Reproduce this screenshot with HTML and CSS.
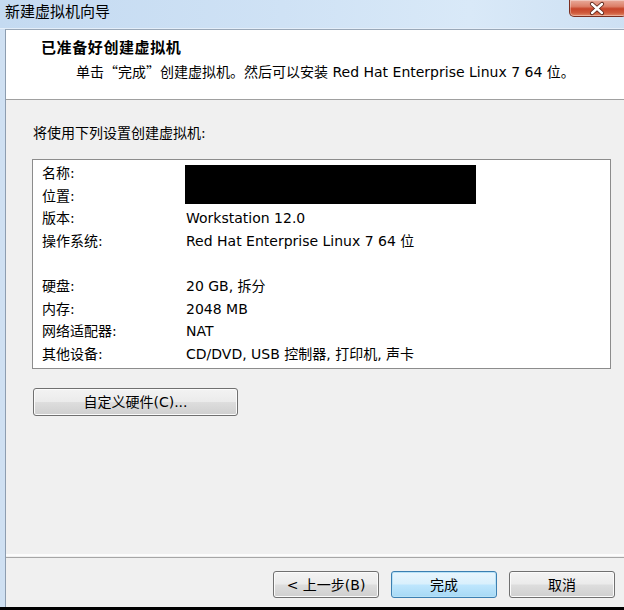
FILE: index.html
```html
<!DOCTYPE html>
<html lang="zh-CN">
<head>
<meta charset="utf-8">
<title>新建虚拟机向导</title>
<link rel="stylesheet" href="styles.css">
</head>
<body>
<div class="window">
  <div class="titlebar">
    <div class="title">新建虚拟机向导</div>
    <div class="close">
      <svg width="58" height="17" viewBox="0 0 58 17">
        <path d="M24 4 L34 13 M34 4 L24 13" stroke="#5a2318" stroke-width="4.2" stroke-linecap="round" fill="none"/>
        <path d="M24 4 L34 13 M34 4 L24 13" stroke="#ffffff" stroke-width="2.4" stroke-linecap="round" fill="none"/>
      </svg>
    </div>
  </div>
  <div class="frame">
    <div class="client">
      <div class="header">
        <div class="h-title">已准备好创建虚拟机</div>
        <div class="h-sub">单击<span class="cjk">“</span>完成<span class="cjk">”</span>创建虚拟机。然后可以安装 Red Hat Enterprise Linux 7 64 位。</div>
      </div>
      <div class="main">
        <div class="intro">将使用下列设置创建虚拟机:</div>
        <div class="listbox">
          <div class="k">名称:</div><div class="v"></div>
          <div class="k">位置:</div><div class="v"></div>
          <div class="k">版本:</div><div class="v">Workstation 12.0</div>
          <div class="k">操作系统:</div><div class="v">Red Hat Enterprise Linux 7 64 位</div>
          <div class="k blank"></div><div class="v blank"></div>
          <div class="k">硬盘:</div><div class="v">20 GB, 拆分</div>
          <div class="k">内存:</div><div class="v">2048 MB</div>
          <div class="k">网络适配器:</div><div class="v">NAT</div>
          <div class="k">其他设备:</div><div class="v">CD/DVD, USB 控制器, 打印机, 声卡</div>
          <div class="redact"></div>
        </div>
        <div class="btn custom">自定义硬件(C)...</div>
      </div>
      <div class="sep"></div>
      <div class="footer">
        <div class="btn">&lt; 上一步(B)</div>
        <div class="btn default">完成</div>
        <div class="btn">取消</div>
      </div>
    </div>
  </div>
</div>
</body>
</html>
```
FILE: styles.css
```css
html, body {
  margin: 0;
  padding: 0;
  width: 624px;
  height: 610px;
  overflow: hidden;
  background: #000;
}
body {
  font-family: "DejaVu Sans", "Noto Sans CJK SC", sans-serif;
  font-size: 14px;
  color: #000;
}
.cjk {
  font-family: "Noto Sans CJK SC", sans-serif;
}
.window {
  width: 627px;
  height: 610px;
  box-sizing: border-box;
  border-bottom: 3px solid #000;
  display: flex;
  flex-direction: column;
  background: #cfe0f2;
}
.titlebar {
  height: 29px;
  flex: none;
  display: flex;
  align-items: flex-start;
  background: linear-gradient(to right, #c4daf1 0%, #cfe2f5 45%, #d9e9f8 75%, #cde0f3 100%);
  box-sizing: border-box;
  border-bottom: 1px solid #e4eef9;
}
.title {
  padding-left: 5px;
  line-height: 24px;
  font-size: 15px;
  color: #000;
}
.close {
  margin-left: auto;
  width: 58px;
  height: 17px;
  box-sizing: border-box;
  border: 1px solid #7b2e20;
  border-top: none;
  border-radius: 0 0 5px 5px;
  background: linear-gradient(#e9ab9c 0%, #dc7f68 40%, #c7452b 55%, #cf5a3c 80%, #e38c6c 100%);
  box-shadow: inset 0 0 0 1px rgba(255,255,255,0.35);
  display: flex;
  align-items: center;
  justify-content: center;
}
.close svg { display: block; margin-left: -2px; }
.frame {
  flex: 1;
  display: flex;
  padding-left: 5px;
  min-height: 0;
}
.client {
  flex: 1;
  display: flex;
  flex-direction: column;
  background: #f0f0f0;
  border-left: 1px solid #8d9db0;
  border-top: 1px solid #9aa8b8;
}
.header {
  height: 70px;
  flex: none;
  background: #fff;
  border-bottom: 1px solid #a0a0a0;
  box-sizing: border-box;
  padding-left: 35px;
}
.h-title {
  padding-top: 8px;
  line-height: 20px;
  font-size: 15px;
  font-weight: bold;
  letter-spacing: 0.6px;
}
.h-sub {
  margin-top: 3px;
  line-height: 20px;
  padding-left: 35px;
  white-space: nowrap;
}
.main {
  flex: 1;
  padding: 23px 16px 0 26px;
}
.intro {
  line-height: 20px;
  margin-left: 1px;
}
.listbox {
  position: relative;
  margin-top: 16px;
  height: 210px;
  box-sizing: border-box;
  border: 1px solid #8c8c8c;
  background: #fff;
  display: grid;
  grid-template-columns: 144px 1fr;
  grid-auto-rows: 22.6px;
  align-content: start;
  padding: 2px 0 0 9px;
  line-height: 22.6px;
  white-space: nowrap;
}
.redact {
  position: absolute;
  left: 152px;
  top: 5px;
  width: 291px;
  height: 39px;
  background: #000;
}
.btn {
  box-sizing: border-box;
  width: 106px;
  height: 27px;
  border: 1px solid #707070;
  border-radius: 3px;
  background: linear-gradient(#f3f3f3 0%, #ebebeb 48%, #dddddd 52%, #cfcfcf 100%);
  box-shadow: inset 0 0 0 1px #fbfbfb;
  display: flex;
  align-items: center;
  justify-content: center;
  line-height: 20px;
  white-space: pre;
}
.custom {
  margin-top: 19px;
  margin-left: 1px;
  width: 205px;
  height: 28px;
}
.default {
  border-color: #3c7fb1;
  background: linear-gradient(#eaf6fd 0%, #d9f0fc 48%, #bee6fd 52%, #a7d9f5 100%);
  box-shadow: inset 0 0 0 1px #b8e2f7;
}
.sep {
  flex: none;
  height: 1px;
  border-top: 2px solid #fcfcfc;
  border-bottom: 1px solid #a6a6a6;
}
.footer {
  flex: none;
  display: flex;
  justify-content: flex-end;
  gap: 12px;
  padding: 13px 12px 9px 0;
}
```
